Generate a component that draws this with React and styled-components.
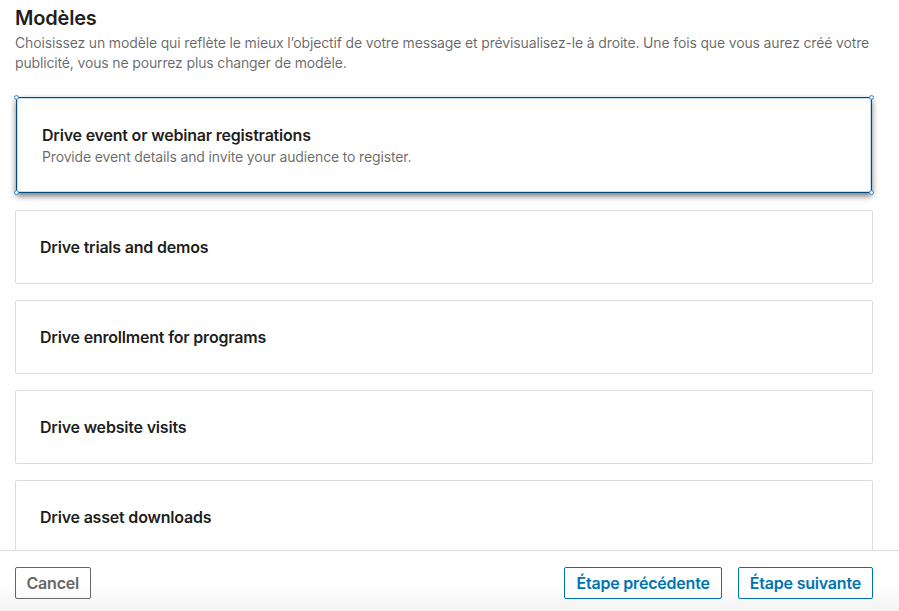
import React from "react";
import styled, { createGlobalStyle } from "styled-components";

const Global = createGlobalStyle`
  html, body { margin: 0; padding: 0; background: #fff; }
  body { font-family: Inter, "Noto Sans", "Liberation Sans", sans-serif; -webkit-font-smoothing: antialiased; }
  #root { height: 611px; }
`;

const Page = styled.div`
  height: 611px;
  display: flex;
  flex-direction: column;
  overflow: hidden;
  background: #fff;
`;

const Scroll = styled.div`
  flex: 1;
  min-height: 0;
  overflow: hidden;
  padding: 4px 26px 0 15px;
`;

const Title = styled.h2`
  margin: 0;
  font-size: 20px;
  line-height: 28px;
  font-weight: 600;
  color: rgba(0, 0, 0, 0.9);
  letter-spacing: -0.2px;
`;

const Description = styled.p`
  margin: 1px 0 0;
  font-size: 14px;
  line-height: 20px;
  font-weight: 400;
  color: rgba(0, 0, 0, 0.6);
  letter-spacing: -0.15px;
`;

const List = styled.div`
  display: flex;
  flex-direction: column;
  gap: 16px;
  margin-top: 24px;
`;

const Card = styled.div`
  position: relative;
  border: 1px solid ${(p) => (p.$selected ? "#004b7c" : "#dcdcdc")};
  border-radius: 2px;
  background: #fff;
  padding: ${(p) => (p.$selected ? "27px 25px 25px" : "26px 24px")};
  margin: ${(p) => (p.$selected ? "0 1px 1px" : "0")};
  box-shadow: ${(p) =>
    p.$selected
      ? "inset 0 0 0 1px #bfe0f7, 0 3px 6px rgba(0,0,0,0.55)"
      : "none"};
`;

const CardTitle = styled.div`
  font-size: 16px;
  line-height: 20px;
  font-weight: 600;
  color: rgba(0, 0, 0, 0.9);
  letter-spacing: -0.2px;
`;

const CardSub = styled.div`
  margin-top: 2px;
  font-size: 14px;
  line-height: 20px;
  color: rgba(0, 0, 0, 0.6);
  letter-spacing: -0.15px;
`;

const Handle = styled.span`
  position: absolute;
  width: 3px;
  height: 3px;
  border-radius: 50%;
  border: 1px solid #3d8fd0;
  background: #dff0fb;
  ${(p) => (p.$top ? "top: -3px;" : "bottom: -3px;")}
  ${(p) => (p.$left ? "left: -3px;" : "right: -3px;")}
`;

const Footer = styled.div`
  flex: none;
  border-top: 1px solid #dedede;
  display: flex;
  align-items: center;
  justify-content: space-between;
  padding: 16px 26px 12px 15px;
  background: linear-gradient(to bottom, #fff 0%, #fff 55%, #f3f3f3 100%);
`;

const Actions = styled.div`
  display: flex;
  gap: 16px;
`;

const Button = styled.button`
  font-family: inherit;
  height: 32px;
  padding: 0 ${(p) => (p.$primary ? 11 : 10.5)}px;
  border-radius: 2px;
  background: transparent;
  border: 1px solid ${(p) => (p.$primary ? "#0073b1" : "#666")};
  color: ${(p) => (p.$primary ? "#0073b1" : "#666")};
  font-size: 16px;
  font-weight: 600;
  letter-spacing: -0.2px;
  cursor: pointer;
`;

const items = [
  { title: "Drive event or webinar registrations", sub: "Provide event details and invite your audience to register.", selected: true },
  { title: "Drive trials and demos" },
  { title: "Drive enrollment for programs" },
  { title: "Drive website visits" },
  { title: "Drive asset downloads" },
];

export default function App() {
  return (
    <>
      <Global />
      <Page>
        <Scroll>
          <Title>Modèles</Title>
          <Description>
            Choisissez un modèle qui reflète le mieux l’objectif de votre message et prévisualisez-le à droite. Une fois que vous aurez créé votre publicité, vous ne pourrez plus changer de modèle.
          </Description>
          <List>
            {items.map((it) => (
              <Card key={it.title} $selected={it.selected}>
                <CardTitle>{it.title}</CardTitle>
                {it.sub && <CardSub>{it.sub}</CardSub>}
                {it.selected && (
                  <>
                    <Handle $top $left />
                    <Handle $top />
                    <Handle $left />
                    <Handle />
                  </>
                )}
              </Card>
            ))}
          </List>
        </Scroll>
        <Footer>
          <Button>Cancel</Button>
          <Actions>
            <Button $primary>Étape précédente</Button>
            <Button $primary>Étape suivante</Button>
          </Actions>
        </Footer>
      </Page>
    </>
  );
}
